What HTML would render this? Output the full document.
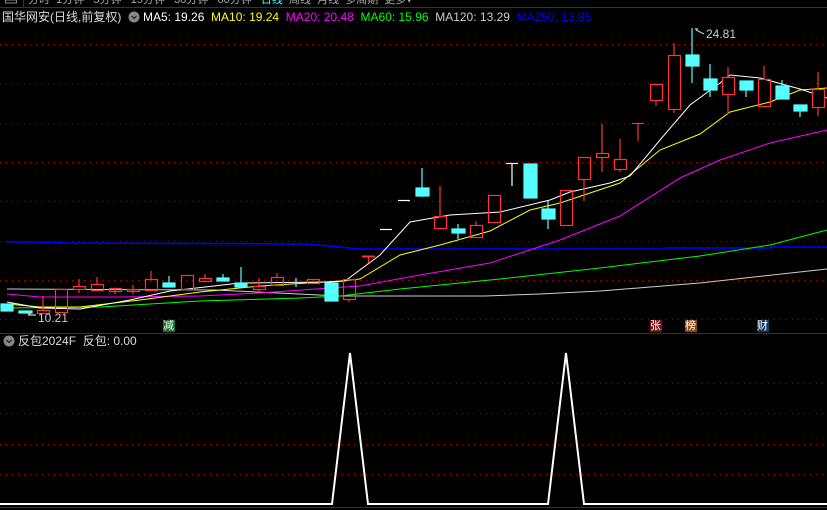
<!DOCTYPE html>
<html><head><meta charset="utf-8"><style>
body{margin:0;background:#000;width:827px;height:510px;overflow:hidden;position:relative;font-family:"Liberation Sans","Noto Sans CJK SC",sans-serif}
.t{position:absolute;font-size:12px;white-space:pre;line-height:14px}
.top{position:absolute;left:0;top:0;width:827px;height:6px;overflow:hidden}
.top span{position:absolute;top:-9px;font-size:11px;color:#aaa;white-space:pre}
</style></head><body>
<div class="top"><span style="left:28px">分时  1分钟   5分钟   15分钟   30分钟   60分钟   <span style="position:static;color:#3ff">日线</span>  周线  月线  多周期  更多▾</span></div>
<svg width="827" height="510" style="position:absolute;left:0;top:0" xmlns="http://www.w3.org/2000/svg">
<g stroke="#a00" stroke-width="1">
<line x1="0" y1="7.5" x2="827" y2="7.5"/><line x1="23.5" y1="0" x2="23.5" y2="7"/>
<rect x="5.5" y="0" width="11" height="3" fill="none" stroke="#888"/>
<line x1="0" y1="333.5" x2="827" y2="333.5"/><line x1="0" y1="507.5" x2="827" y2="507.5"/>
</g>
<g stroke="#a00" stroke-width="1" stroke-dasharray="1,5">
<line x1="0" y1="44.5" x2="827" y2="44.5"/><line x1="0" y1="83.5" x2="827" y2="83.5"/>
<line x1="0" y1="123.5" x2="827" y2="123.5"/><line x1="0" y1="162.5" x2="827" y2="162.5"/>
<line x1="0" y1="201.5" x2="827" y2="201.5"/><line x1="0" y1="241.5" x2="827" y2="241.5"/>
<line x1="0" y1="280.5" x2="827" y2="280.5"/><line x1="0" y1="319.5" x2="827" y2="319.5"/>
<line x1="0" y1="383.5" x2="827" y2="383.5"/><line x1="0" y1="413.5" x2="827" y2="413.5"/>
<line x1="0" y1="444.5" x2="827" y2="444.5"/><line x1="0" y1="474.5" x2="827" y2="474.5"/>
</g>
<g fill="none" stroke-width="1">
<polyline stroke="#00f" stroke-width="1.5" points="7,242 35,242 70,243 305,244 340,247 360,249 665,249 665,248 770,248 773,247 827,247"/>
<polyline stroke="#ccc" points="7,289 215,290 340,296 485,296 540,294 600,291 700,283 827,269"/>
<polyline stroke="#0f0" points="7,308 100,307 200,301 300,298 340,296 400,289 500,279 600,268 700,256 770,245 827,230"/>
<polyline stroke="#f0f" points="7,294 40,297 120,297 200,296 260,293 330,288 360,286 420,275 490,263 560,240 620,216 680,178 720,160 770,143 827,130"/>
<polyline stroke="#ff0" points="7,304 40,307 80,307 140,300 200,292 260,286 340,281 360,279 400,255 440,245 490,231 530,210 560,203 620,183 660,150 700,134 730,112 770,102 800,90 827,88"/>
<polyline stroke="#fff" points="7,302 40,308 80,309 130,300 170,291 240,283 330,282 345,281 380,255 410,222 450,215 500,212 550,200 570,192 610,183 630,176 660,140 690,105 720,83 730,75 760,78 800,89 827,98"/>
</g>
<g stroke="#f33" stroke-width="1.2" fill="none">
<line x1="43" y1="296" x2="43" y2="310"/><rect x="37.5" y="310.5" width="12" height="3"/>
<rect x="55.5" y="289.5" width="12" height="23"/>
<line x1="79" y1="279" x2="79" y2="293"/><rect x="73.5" y="286.5" width="12" height="3" fill="#000"/>
<line x1="97" y1="277" x2="97" y2="284"/><rect x="91.5" y="284.5" width="12" height="6"/>
<line x1="115" y1="288" x2="115" y2="294"/><rect x="109.5" y="288.5" width="12" height="3"/>
<line x1="133" y1="285" x2="133" y2="294"/><rect x="127.5" y="289.5" width="12" height="2"/>
<line x1="151" y1="271" x2="151" y2="279"/><rect x="145.5" y="279.5" width="12" height="11"/>
<rect x="181.5" y="275.5" width="12" height="14"/>
<line x1="205" y1="274" x2="205" y2="278"/><rect x="199.5" y="278.5" width="12" height="3"/>
<line x1="259" y1="278" x2="259" y2="293"/><rect x="253.5" y="286.5" width="12" height="3" fill="#000"/>
<line x1="277" y1="273" x2="277" y2="277"/><rect x="271.5" y="277.5" width="12" height="8"/>
<rect x="307.5" y="279.5" width="12" height="4"/>
<line x1="349" y1="299" x2="349" y2="302"/><rect x="343.5" y="279.5" width="12" height="20"/>
<line x1="362" y1="256.5" x2="375" y2="256.5" stroke-width="2"/><line x1="368.5" y1="256" x2="368.5" y2="263"/>
<line x1="440" y1="186" x2="440" y2="216"/><rect x="434.5" y="216.5" width="12" height="12"/>
<line x1="476" y1="221" x2="476" y2="225"/><rect x="470.5" y="225.5" width="12" height="12"/>
<rect x="488.5" y="195.5" width="12" height="27"/>
<rect x="560.5" y="190.5" width="12" height="35"/>
<line x1="584" y1="179" x2="584" y2="201"/><rect x="578.5" y="157.5" width="12" height="22"/>
<line x1="602" y1="124" x2="602" y2="172"/><rect x="596.5" y="153.5" width="12" height="4" fill="#000"/>
<line x1="620" y1="139" x2="620" y2="172"/><rect x="614.5" y="159.5" width="12" height="10" fill="#000"/>
<line x1="632" y1="123.5" x2="644" y2="123.5"/><line x1="638" y1="123" x2="638" y2="141"/>
<line x1="656" y1="100" x2="656" y2="106"/><rect x="650.5" y="84.5" width="12" height="16"/>
<line x1="674" y1="43" x2="674" y2="113"/><rect x="668.5" y="55.5" width="12" height="54" fill="#000"/>
<line x1="728" y1="67" x2="728" y2="114"/><rect x="722.5" y="77.5" width="12" height="17" fill="#000"/>
<line x1="764" y1="66" x2="764" y2="79"/><rect x="758.5" y="79.5" width="12" height="27"/>
<line x1="818" y1="72" x2="818" y2="116"/><rect x="812.5" y="89.5" width="12" height="18" fill="#000"/>
</g>
<g fill="#5ff" stroke="#5ff" stroke-width="1.2">
<rect x="1" y="304" width="12" height="7"/><rect x="19" y="311" width="13" height="2"/>
<line x1="169" y1="276" x2="169" y2="283"/><rect x="163" y="283" width="12" height="4"/>
<line x1="223" y1="274" x2="223" y2="278"/><rect x="217" y="278" width="12" height="3"/>
<line x1="241" y1="267" x2="241" y2="283"/><rect x="235" y="283" width="12" height="4"/>
<line x1="296" y1="278" x2="296" y2="287"/>
<rect x="325" y="283" width="13" height="18"/>
<line x1="422" y1="168" x2="422" y2="197"/><rect x="416" y="188" width="13" height="8"/>
<line x1="458" y1="224" x2="458" y2="239"/><rect x="452" y="229" width="13" height="4"/>
<rect x="524" y="164" width="13" height="34"/>
<line x1="548" y1="201" x2="548" y2="229"/><rect x="542" y="209" width="13" height="10"/>
<line x1="692" y1="28" x2="692" y2="83"/><rect x="686" y="55" width="13" height="11"/>
<line x1="710" y1="64" x2="710" y2="97"/><rect x="704" y="79" width="13" height="11"/>
<line x1="746" y1="90" x2="746" y2="97"/><rect x="740" y="81" width="13" height="9"/>
<line x1="782" y1="80" x2="782" y2="86"/><rect x="776" y="86" width="13" height="13"/>
<line x1="800" y1="111" x2="800" y2="117"/><rect x="794" y="105" width="13" height="6"/>
</g>
<g stroke="#fff" stroke-width="1.2">
<line x1="380" y1="229.5" x2="392" y2="229.5"/><line x1="398" y1="200.5" x2="410" y2="200.5"/>
<line x1="506" y1="163.5" x2="518" y2="163.5"/><line x1="512" y1="163" x2="512" y2="186"/>
<path d="M695 29 L698 29 M696 30 L704 34" stroke="#ccc" fill="none"/>
<path d="M28 315 L36 315 M28 315 L32 312" stroke="#ccc" fill="none"/>
</g>
<polyline fill="none" stroke="#fff" stroke-width="2" points="0,504 332,504 350,353 368,504 548,504 566,353 584,504 827,504"/>
<rect x="163" y="320" width="12" height="12" fill="#1a6b2a"/>
<rect x="650" y="320" width="12" height="12" fill="#7a1010"/>
<rect x="685" y="320" width="12" height="12" fill="#8a4a10"/>
<rect x="757" y="320" width="12" height="12" fill="#143a66"/>
<circle cx="134" cy="17" r="5.5" fill="#888"/><path d="M131.5 16 L134 18.5 L136.5 16" stroke="#222" fill="none" stroke-width="1.3"/>
<circle cx="9" cy="341" r="5.5" fill="#888"/><path d="M6.5 340 L9 342.5 L11.5 340" stroke="#222" fill="none" stroke-width="1.3"/>
</svg>
<div class="t" style="left:2px;top:10px;color:#ddd">国华网安(日线,前复权)</div>
<div class="t" style="left:143px;top:10px"><span style="color:#fff">MA5: 19.26 </span><span style="color:#ff0"> MA10: 19.24 </span><span style="color:#f0f"> MA20: 20.48 </span><span style="color:#0f0"> MA60: 15.96 </span><span style="color:#ccc"> MA120: 13.29 </span><span style="color:#00f"> MA250: 13.85</span></div>
<div class="t" style="left:706px;top:27px;color:#ccc">24.81</div>
<div class="t" style="left:38px;top:311px;color:#ccc">10.21</div>
<div class="t" style="left:163px;top:319px;color:#fff;font-size:11px">减</div>
<div class="t" style="left:650px;top:319px;color:#fff;font-size:11px">张</div>
<div class="t" style="left:685px;top:319px;color:#fff;font-size:11px">榜</div>
<div class="t" style="left:757px;top:319px;color:#fff;font-size:11px">财</div>
<div class="t" style="left:18px;top:334px;color:#ddd">反包2024F  反包: 0.00</div>
</body></html>
